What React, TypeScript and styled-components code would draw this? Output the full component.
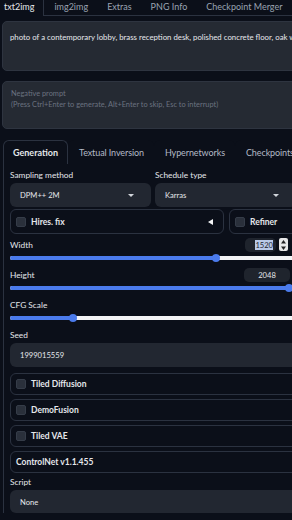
import { FC } from 'react';
import styled, { createGlobalStyle } from 'styled-components';

const GlobalStyle = createGlobalStyle`
  html, body {
    margin: 0;
    padding: 0;
    background: #0b0f19;
    overflow: hidden;
  }
  body {
    font-family: Lato, "Noto Sans", sans-serif;
    color: #e5e7eb;
  }
`;

const topTabs = ['txt2img', 'img2img', 'Extras', 'PNG Info', 'Checkpoint Merger'];
const subTabs = ['Generation', 'Textual Inversion', 'Hypernetworks', 'Checkpoints', 'Lora'];
const extensions = ['Tiled Diffusion', 'DemoFusion', 'Tiled VAE'];

const App: FC = () => {
  return (
    <PageStyled>
      <GlobalStyle />
      <TopTabBar>
        {topTabs.map((t, i) => (
          <TopTab key={t} active={i === 0} first={i === 0}>{t}</TopTab>
        ))}
      </TopTabBar>

      <PromptBox>
        photo of a contemporary lobby, brass reception desk, polished concrete floor, oak wood panels
      </PromptBox>
      <PromptBox muted>
        Negative prompt
        <br />
        (Press Ctrl+Enter to generate, Alt+Enter to skip, Esc to interrupt)
      </PromptBox>

      <SubTabBar>
        {subTabs.map((t, i) => (
          <SubTab key={t} active={i === 0}>{t}</SubTab>
        ))}
      </SubTabBar>

      <Panel>
        <TwoCols>
          <Field>
            <Label>Sampling method</Label>
            <Dropdown>
              <span>DPM++ 2M</span>
              <Caret />
            </Dropdown>
          </Field>
          <Field>
            <Label>Schedule type</Label>
            <Dropdown>
              <span>Karras</span>
              <Caret />
            </Dropdown>
          </Field>
        </TwoCols>

        <CheckRowLine>
          <CheckBox grow>
            <Tick />
            <span>Hires. fix</span>
            <LeftArrow />
          </CheckBox>
          <CheckBox grow>
            <Tick />
            <span>Refiner</span>
          </CheckBox>
        </CheckRowLine>

        <SliderBlock>
          <SliderHead>
            <Label>Width</Label>
            <NumberWrap>
              <NumberBox focused>
                <Selected>1520</Selected>
              </NumberBox>
              <Spinner>
                <svg width="7" height="12" viewBox="0 0 7 12">
                  <path d="M3.5 1 L6 4.5 H1 Z" fill="#222" />
                  <path d="M3.5 11 L6 7.5 H1 Z" fill="#222" />
                </svg>
              </Spinner>
            </NumberWrap>
          </SliderHead>
          <Slider>
            <Fill style={{ width: '72%' }} />
            <Thumb style={{ left: '72%' }} />
          </Slider>
        </SliderBlock>

        <SliderBlock>
          <SliderHead>
            <Label>Height</Label>
            <NumberBox>2048</NumberBox>
          </SliderHead>
          <Slider>
            <Fill style={{ width: '97.5%' }} />
            <Thumb style={{ left: '97.5%' }} />
          </Slider>
        </SliderBlock>

        <SliderBlock>
          <SliderHead>
            <Label>CFG Scale</Label>
          </SliderHead>
          <Slider>
            <Fill style={{ width: '22%' }} />
            <Thumb style={{ left: '22%' }} />
          </Slider>
        </SliderBlock>

        <SeedField>
          <Label>Seed</Label>
          <Dropdown>
            <span>1999015559</span>
          </Dropdown>
        </SeedField>

        <ExtList>
          {extensions.map((e) => (
            <CheckBox key={e}>
              <Tick />
              <span>{e}</span>
            </CheckBox>
          ))}
          <CheckBox>
            <span>ControlNet v1.1.455</span>
          </CheckBox>
        </ExtList>

        <Field>
          <Label>Script</Label>
          <Dropdown tall>
            <span>None</span>
          </Dropdown>
        </Field>
      </Panel>
    </PageStyled>
  );
};

const PageStyled = styled.div`
  width: 340px;
  height: 520px;
  overflow: hidden;
`;

const TopTabBar = styled.div`
  display: flex;
  height: 15px;
  border-bottom: 1px solid #2b3240;
`;

const TopTab = styled.div<{ active?: boolean; first?: boolean }>`
  padding: 0 9px 0 ${(p) => (p.first ? '4px' : '10px')};
  font-size: 9px;
  line-height: 14px;
  white-space: nowrap;
  color: ${(p) => (p.active ? '#e5e7eb' : '#9aa3b2')};
  ${(p) =>
    p.active &&
    `
    background: #0b0f19;
    border-right: 1px solid #2b3240;
    margin-bottom: -1px;
    height: 16px;
  `}
`;

const PromptBox = styled.div<{ muted?: boolean }>`
  margin: ${(p) => (p.muted ? '10px 0 0 2px' : '5px 0 0 2px')};
  height: ${(p) => (p.muted ? '48px' : '50px')};
  box-sizing: border-box;
  padding: ${(p) => (p.muted ? '6px 8px' : '9px 7px')};
  background: #252a33;
  border: 1px solid #2e3440;
  border-radius: 5px;
  font-size: ${(p) => (p.muted ? '7.4px' : '7.8px')};
  line-height: ${(p) => (p.muted ? '11px' : '12px')};
  color: ${(p) => (p.muted ? '#6b7280' : '#e5e7eb')};
  white-space: nowrap;
  overflow: hidden;
`;

const SubTabBar = styled.div`
  display: flex;
  margin: 11px 0 0 3px;
  height: 23px;
  border-bottom: 1px solid #2b3240;
`;

const SubTab = styled.div<{ active?: boolean }>`
  padding: ${(p) => (p.active ? '0 9px 0 9px' : '0 9px 0 10px')};
  font-size: 9px;
  line-height: 23px;
  white-space: nowrap;
  color: ${(p) => (p.active ? '#e5e7eb' : '#b3bac6')};
  border: 1px solid ${(p) => (p.active ? '#2b3240' : 'transparent')};
  border-bottom: none;
  border-radius: 6px 6px 0 0;
  height: 24px;
  box-sizing: border-box;
  background: #0b0f19;
  font-weight: ${(p) => (p.active ? 700 : 400)};
  letter-spacing: ${(p) => (p.active ? '0' : '-0.1px')};
`;

const Panel = styled.div`
  margin-left: 3px;
  border-left: 1px solid #2b3240;
  padding: 5px 0 0 6px;
  display: flex;
  flex-direction: column;
`;

const TwoCols = styled.div`
  display: grid;
  grid-template-columns: 141px 141px;
  gap: 4px;
`;

const Field = styled.div`
  display: flex;
  flex-direction: column;
  gap: 2px;
`;

const SeedField = styled(Field)`
  margin-top: 5px;
`;

const Label = styled.div`
  font-size: 8.3px;
  line-height: 12px;
  color: #e5e7eb;
  white-space: nowrap;
`;

const Dropdown = styled.div<{ tall?: boolean }>`
  height: ${(p) => (p.tall ? '23px' : '24px')};
  box-sizing: border-box;
  background: #222731;
  border-radius: 6px;
  display: flex;
  align-items: center;
  justify-content: space-between;
  padding: 0 10px 0 10px;
  font-size: 7.6px;
  color: #e5e7eb;
`;

const Caret = styled.span`
  width: 0;
  height: 0;
  border-left: 3px solid transparent;
  border-right: 3px solid transparent;
  border-top: 3px solid #d1d5db;
  margin-right: 7px;
`;

const CheckRowLine = styled.div`
  display: grid;
  grid-template-columns: 214px 80px;
  gap: 5px;
  margin-top: 2px;
`;

const CheckBox = styled.div<{ grow?: boolean }>`
  height: ${(p) => (p.grow ? '25px' : '22px')};
  box-sizing: border-box;
  border: 1px solid #2b3240;
  border-radius: 6px;
  display: flex;
  align-items: center;
  gap: 5px;
  padding: 0 10px 0 5px;
  font-size: 8.5px;
  color: #e5e7eb;
  white-space: nowrap;
  font-weight: 700;
`;

const Tick = styled.span`
  width: 8px;
  height: 8px;
  border-radius: 2px;
  background: #2a303b;
  border: 1px solid #353c48;
  flex-shrink: 0;
`;

const LeftArrow = styled.span`
  margin-left: auto;
  width: 0;
  height: 0;
  border-top: 3.5px solid transparent;
  border-bottom: 3.5px solid transparent;
  border-right: 5px solid #f3f4f6;
`;

const SliderBlock = styled.div`
  display: flex;
  flex-direction: column;
  margin-top: 3px;
`;

const SliderHead = styled.div`
  display: flex;
  justify-content: space-between;
  align-items: center;
  height: 15px;
  width: 280px;
`;

const NumberWrap = styled.div`
  display: flex;
  align-items: center;
  gap: 3px;
`;

const NumberBox = styled.div<{ focused?: boolean }>`
  width: ${(p) => (p.focused ? '31px' : '46px')};
  height: 14px;
  box-sizing: border-box;
  background: #1f242d;
  border-radius: 5px;
  font-size: 7.6px;
  line-height: 14px;
  color: #e5e7eb;
  text-align: ${(p) => (p.focused ? 'right' : 'center')};
  padding-right: ${(p) => (p.focused ? '3px' : '0')};
`;

const Selected = styled.span`
  background: #b9c9e8;
  color: #1b2230;
`;

const Spinner = styled.span`
  width: 9px;
  height: 13px;
  background: #e8e8e8;
  border-radius: 2px;
  display: flex;
  align-items: center;
  justify-content: center;
  margin-right: 2px;
`;

const Slider = styled.div`
  position: relative;
  margin-top: 4px;
  height: 4px;
  width: 286px;
  background: #f3f4f6;
  border-radius: 2px;
  margin-bottom: 4px;
`;

const Fill = styled.div`
  height: 100%;
  background: #4b7bec;
  border-radius: 2px;
`;

const Thumb = styled.span`
  position: absolute;
  top: 50%;
  width: 8px;
  height: 8px;
  border-radius: 50%;
  background: #4b7bec;
  transform: translate(-50%, -50%);
`;

const ExtList = styled.div`
  display: flex;
  flex-direction: column;
  gap: 4px;
  margin-top: 6px;
  margin-bottom: 3px;
`;

export default App;
